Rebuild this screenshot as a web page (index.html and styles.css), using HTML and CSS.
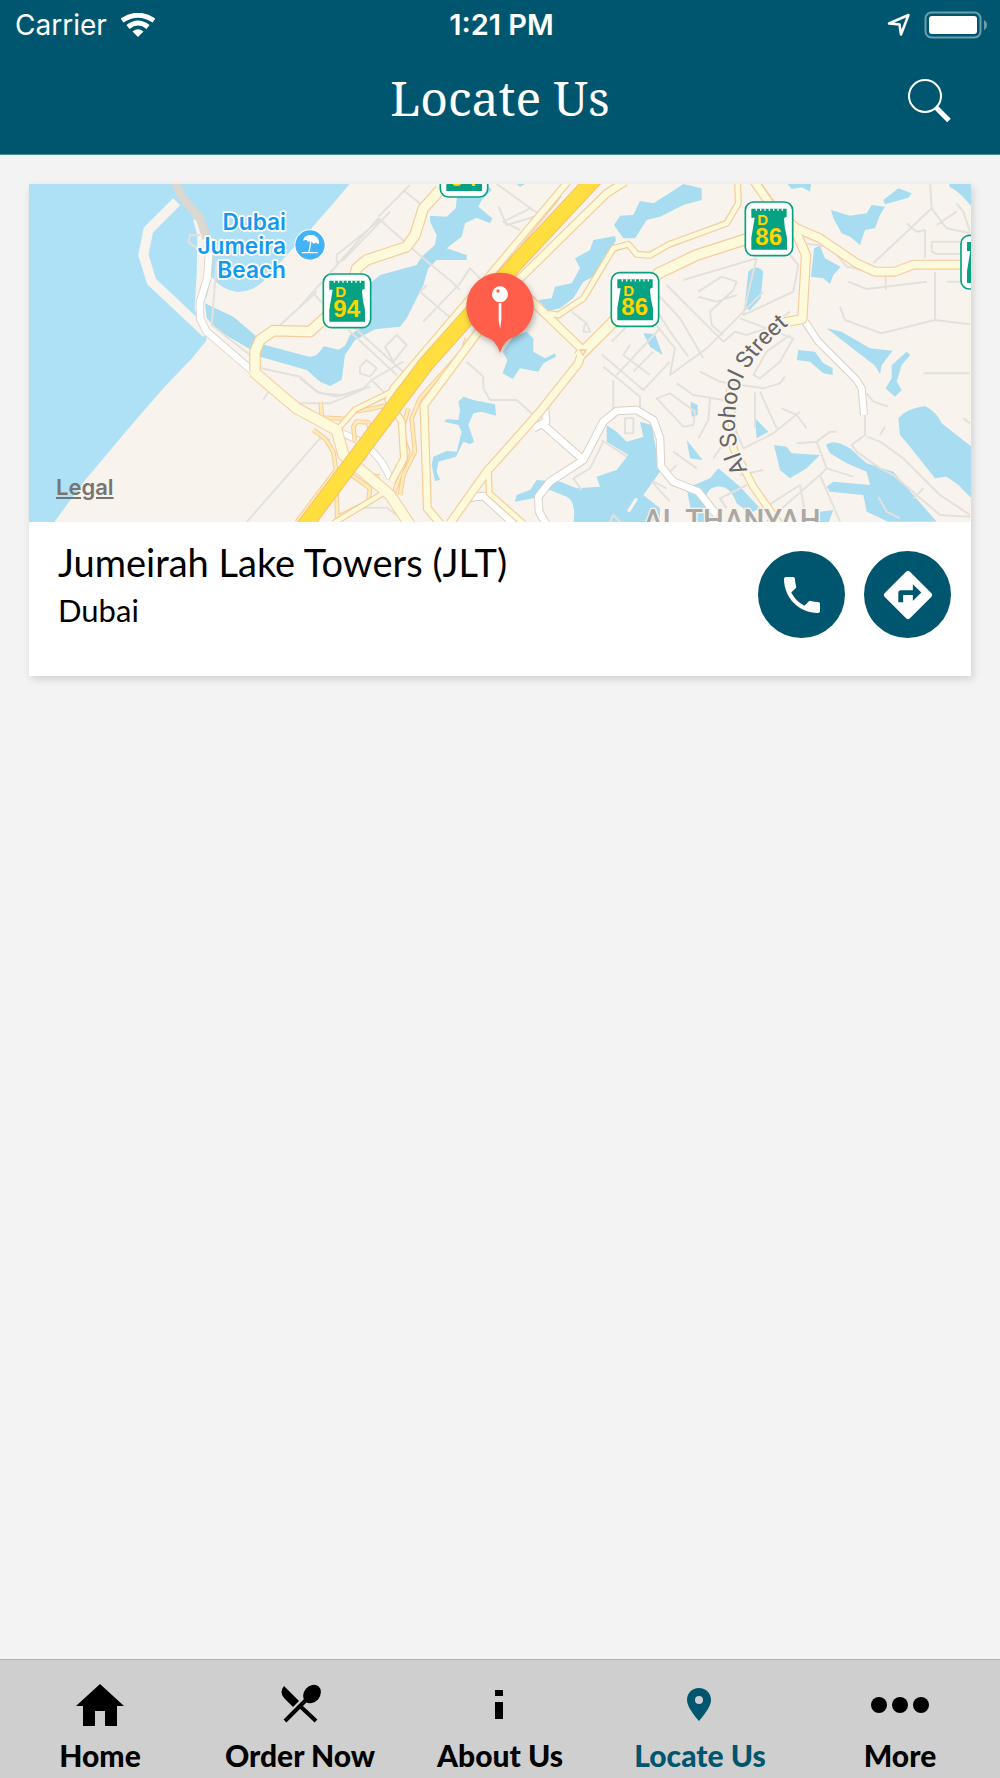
FILE: index.html
```html
<!DOCTYPE html>
<html lang="en">
<head>
    <meta charset="UTF-8" />
    <meta name="viewport" content="width=device-width, initial-scale=1.0" />
    <title>Locate Us</title>
    <link rel="stylesheet" href="styles.css">
</head>
<body>
    <header class="header">
        <div class="status-bar">
            <div class="carrier">
                <span>Carrier</span>
                <svg width="34" height="24" viewBox="0 0 34 24" fill="none" stroke="#fff">
                    <path d="M1 7.500Q17-3 33 7.500" stroke-width="5" />
                    <path d="M7 14Q17 6 27 14" stroke-width="5" />
                    <path d="M11.500 18.500Q17 14 22.500 18.500L17 24Z" fill="#fff" stroke="none" />
                </svg>
            </div>
            <div class="time">1:21 PM</div>
            <div class="indicators">
                <svg width="24" height="24" viewBox="0 0 24 24" fill="none" stroke="#fff" stroke-width="2.500" stroke-linejoin="round">
                    <path d="M21.500 2L14 21.500L12.500 11.500L2 10.500Z" />
                </svg>
                <svg width="64" height="28" viewBox="0 0 64 28">
                    <rect x="1.500" y="1.500" width="55" height="25" rx="6" fill="none" stroke="#6b9dab" stroke-width="2" />
                    <rect x="5" y="5" width="48" height="18" rx="3" fill="#fff" />
                    <path d="M60 9Q63 10.500 63 14Q63 17.500 60 19Z" fill="#6b9dab" />
                </svg>
            </div>
        </div>
        <div class="title-bar">
            <h1>Locate Us</h1>
            <button class="search-button" aria-label="Search">
                <svg width="44" height="48" viewBox="0 0 44 48" fill="none" stroke="#fff">
                    <circle cx="18" cy="22" r="16" stroke-width="2" />
                    <path d="M28.500 33L42 46.500" stroke-width="5" />
                </svg>
            </button>
        </div>
    </header>

    <main class="content">
        <article class="card">
            <div class="map">
                <svg class="map-art" viewBox="-813 27 2826 1014" preserveAspectRatio="xMidYMid slice" role="img" aria-label="Map of Jumeirah Lake Towers">
                    <defs>
                        <g id="shield">
                            <rect x="3" y="3" width="142" height="161" rx="25" fill="#fff" stroke="#06a281" stroke-width="5" />
                            <path d="M21 23H127V48Q119 48 119 54Q120 82 128 110V146H21V110L31 50H21Z" fill="#06a281" />
                            <path d="M34 26H119" stroke="#fff" stroke-width="7" stroke-dasharray="4 9" />
                            <text class="shield-letter" x="39" y="72">D</text>
                        </g>
                        <!-- link roads of the interchange -->
                        <g id="ramps">
                            <path d="M62 683L66 728L150 732M120 755L160 710L220 700L265 690M40 765L75 790L100 830L108 885L-10 1041M108 885L112 1041M165 800L160 755L170 740L205 742L215 800L190 850L175 845M325 700L305 770L325 830L300 900L280 960M240 905Q180 905 130 855M500 490L490 525L360 670L335 730L345 830L310 900L300 960M155 900L210 940L205 975M115 1025L245 960M520 340L500 390L300 640M780 60L610 270" />
                        </g>
                    </defs>

                    <rect x="-820" y="20" width="2840" height="1030" fill="#f8f4ed" />

                    <!-- sea -->
                    <path fill="#aee1f5" d="M-820 20H155L100 85L30 165L-40 240L-100 310Q-140 352-190 350Q-235 345-265 305L-285 385L-290 440L-280 495L-320 545L-410 640L-510 755L-640 910L-740 1045H-820Z" />
                    <path class="beach" stroke-width="30" d="M-370 80L-455 165L-470 240L-445 320L-280 475" />
                    <path class="beach" stroke-width="32" d="M-305 130L-292 180L-294 300L-300 400L-280 470" />

                    <!-- marina, lakes and pools -->
                    <g fill="#a8dcf0">
                        <path d="M-285 385L-200 425L-130 485L-105 510L30 546L50 540L72 514L115 524L135 512L150 480L180 460L215 370L205 330L240 300L350 270L365 245L405 210L410 180L390 140V122L440 125L467 100L475 27H560L575 45L545 75L535 95L577 130L570 145L530 128L495 145L485 185L440 220L500 240V255L410 255L385 280L370 330L350 370L320 430L300 455L225 463L165 495L135 540L125 615L90 633L60 620L20 585L-120 545L-155 520L-240 470L-280 430Z" />
                        <path d="M640 485L680 470L700 490V530L735 550L765 535L768 545L730 565L715 590L660 580L638 612L608 595L622 555L608 530Z" />
                        <path d="M490 665L520 675L585 688L588 722L545 710L520 715L505 750L522 800L510 808L490 800L468 845L415 860L410 890L420 915L405 918L395 870L400 845L440 828L470 830L485 770L475 750L433 740L440 732L475 735L480 705L475 680Z" />
                        <path d="M715 375L755 370L765 335L815 325L840 280L825 250L870 225L880 195L945 183L948 195L900 295L850 320L820 370L780 400L745 408Z" />
                        <path d="M942 150L960 122L1000 120L1020 78L1060 85L1115 50L1150 27L1205 40V75L1150 90L1080 125L1040 135L1005 190L970 190Z" />
                        <path d="M1593 105L1650 122L1700 115L1715 90L1755 95L1740 120L1725 160L1695 165L1680 210L1650 185L1625 175L1600 130ZM1750 75L1795 40L1835 55L1825 68L1755 88ZM1463 27H1533L1530 50L1505 37L1475 42ZM1948 27H2015V95Q1980 50 1948 35Z" />
                        <path d="M1542 220L1560 212L1575 250L1622 275L1600 300L1590 327L1570 310L1533 305ZM1345 290Q1370 265 1390 290L1382 370L1350 405L1333 400Z" />
                        <path d="M1580 460L1625 470L1710 520L1778 527L1745 570L1740 597L1725 572ZM1820 530L1831 540L1805 570L1790 620L1805 645L1785 665L1757 640L1775 610V570ZM1495 525L1545 530L1570 565L1598 580V600L1570 595L1530 560L1490 555Z" />
                        <path d="M1795 730Q1820 700 1875 693Q1910 710 1925 745L2015 815V970L1975 930L1940 905L1905 910L1830 815L1800 780Z" />
                        <path d="M1030 475L1065 477L1088 540L1050 515ZM1172 680L1193 690V720L1175 725ZM1365 730L1405 770L1370 790ZM1160 795L1208 855L1170 850Z" />
                        <path d="M1422 810L1460 815L1475 835L1560 840L1520 880L1470 910L1440 885ZM1578 810Q1600 790 1650 820L1700 865L1780 890L1840 960L1910 1040H1765L1700 1010L1690 960L1590 950L1580 935L1600 920L1710 930L1700 890L1640 865L1590 835Z" />
                        <path d="M920 750L950 770L980 800L1030 785L1020 740L1055 750L1080 890L1030 960L1080 1000V1045H820Q830 980 800 965L750 945L700 970L645 980L650 960L690 945L710 915L780 920L830 940L900 935L890 905L950 885L985 840L920 800Z" />
                        <path d="M1160 940L1230 910L1255 880L1320 935L1380 1000L1350 1015L1310 985Q1290 930 1250 935T1220 990L1240 1045H1180ZM1560 1010L1600 1005L1585 1045H1545ZM650 27H675L660 35Z" />
                    </g>
                    <path class="islet" d="M1110 885Q1140 910 1100 960M1010 970L985 1010" />

                    <!-- small streets -->
                    <g class="streets">
                        <path d="M0 395L235 130L370 250L455 320L480 345M235 125L330 30M310 45L365 90M240 135L110 240L110 262L130 255L270 110M145 465L290 600M160 455L320 600M40 355L110 430M370 440L480 325L510 280L550 320M380 330L360 350L500 470M255 515L290 480L320 510L280 560ZM180 575L200 555L230 580L210 605L180 595ZM215 615L280 680M0 610L60 655L130 660L190 640L215 615L310 560M590 27L720 120L620 150L595 95M0 685H90L210 635M690 100L610 140L660 165" />
                        <path d="M-160 1041L60 790L90 795M-65 455L50 350M-115 580L0 605L50 650L110 665L190 640M-110 675L-95 650M-250 260L-265 450L-150 540L-120 550M-300 180H-330L-335 200L-310 220L-260 210" />
                        <path d="M500 560L550 605V640L570 675L650 675L700 720M815 410L860 445L870 470H850L855 445M905 538L1030 645L1110 560M910 575L1020 665V700M935 500L1005 430M990 510L970 540L1050 600M1000 590L1060 530M940 615V700M950 600L1080 460M975 730H1000V775H975ZM910 800L870 880L820 910L845 945M905 795L980 845M190 998H260L290 1020M930 1041L940 1020L960 1041" />
                        <path d="M1100 330L1170 400L1270 500M1075 360L1140 430L1210 550M1055 380L1110 470L1165 545M1060 440L1125 520L1110 600L1220 520L1390 350M1195 350L1265 305L1310 320L1300 345L1230 410L1235 450L1270 480M1195 365L1250 380L1310 360M1150 315L1370 250L1350 330L1330 420L1480 350L1495 270L1470 240M1320 430L1400 460L1470 410M1270 500L1305 470L1340 480L1400 460L1480 490L1440 560L1380 610L1360 600L1400 530L1470 480M1130 625L1180 660L1300 680M1070 670L1110 655L1185 710L1180 750L1150 755ZM1200 590L1260 620L1390 640L1440 625L1455 605M1310 640L1300 750L1330 820L1420 775L1500 710M1365 650V760M1380 650L1430 760M1445 700L1490 720L1520 760M1230 670L1225 735L1195 790" />
                        <path d="M1890 20L1895 100L1720 265M1895 100L1940 160L2010 175M1820 145L1850 170L1875 165V250M1970 85L1990 110L2010 170M1970 110L1910 150M1895 200H2010M1895 200V230L1910 237H2010M1905 290V435L1745 475L1635 435L1620 395M1645 320L1700 342L1880 320M1757 300V345M1905 435L2010 448M1940 320H2010M1510 205L1590 215L1640 275L1720 290M1870 595H2010M1695 720V780L1655 810L1670 830L1740 880L1780 900L1920 1020L2010 1025M1700 785L1740 800L1810 850L1920 960L2010 1020M1700 655L1720 680L1765 695M1490 805L1550 800L1590 770L1610 770M1550 800L1580 880L1560 900L1400 1040M1580 880L1660 905M1560 900L1620 1040M1390 1000L1500 930L1520 1041M1735 965L1760 1010L1800 1030M1870 940L1840 970M1990 730L2010 745M1740 780L1755 755" />
                        <path d="M1120 830L1190 880M1130 870L1110 890M1055 920L1110 980M1060 920L1100 940M1240 850L1260 820L1300 800M1320 900L1390 885M1340 930L1260 970L1280 1000" />
                    </g>

                    <!-- roads: casing first, fill on top -->
                    <path class="boulevard" d="M-375 20L-355 65L-300 130L-280 190" />
                    <g class="casing-white">
                        <path d="M-270 190L-278 310L-300 380V430L-280 470L-140 590" stroke-width="25" />
                        <path d="M735 700L738 740L700 760M725 745L850 855L910 740L950 708L1010 705L1060 735L1080 790L1083 875L1120 920L1195 950L1250 1020M850 855L750 920L715 965L717 1010L740 1050M510 968L550 963L640 1045" stroke-width="26" />
                        <path d="M1515 440L1555 500L1670 615L1685 640L1692 720" stroke-width="24" />
                        <path d="M110 770Q230 805 270 910" stroke-width="23" />
                    </g>
                    <g class="fill-white">
                        <path d="M-270 190L-278 310L-300 380V430L-280 470L-140 590" stroke-width="20" />
                        <path d="M735 700L738 740L700 760M725 745L850 855L910 740L950 708L1010 705L1060 735L1080 790L1083 875L1120 920L1195 950L1250 1020M850 855L750 920L715 965L717 1010L740 1050M510 968L550 963L640 1045" stroke-width="20" />
                        <path d="M1515 440L1555 500L1670 615L1685 640L1692 720" stroke-width="18" />
                        <path d="M110 770Q230 805 270 910" stroke-width="18" />
                    </g>
                    <use href="#ramps" class="ramp-casing" />
                    <use href="#ramps" class="ramp-fill" />
                    <g class="casing">
                        <path d="M820 0L540 335L280 640L265 675L305 740L312 850L275 920" stroke-width="24" />
                        <path d="M975 20L920 55L640 330L372 690L382 1000L420 1045" stroke-width="27" />
                        <path d="M660 345L750 430L848 525L835 565L720 710L560 890L450 1045" stroke-width="28" />
                        <path d="M745 415L775 420L850 370L940 220L985 208L1010 238L1050 241L1105 209L1280 145L1315 85L1312 0" stroke-width="21" />
                        <path d="M835 545L930 450L1075 295L1190 240L1340 192" stroke-width="36" />
                        <path d="M565 890L568 955L675 1050" stroke-width="21" />
                        <path d="M1350 0L1420 100L1490 160L1560 190L1670 265L1725 290H1785L1840 269H2020" stroke-width="30" />
                        <path d="M1485 165L1518 240L1507 432L1450 443" stroke-width="31" />
                        <path d="M1290 640L1300 820L1360 935L1440 1050" stroke-width="25" />
                        <path d="M-140 590L-10 700L110 765L130 840L270 960L330 1050" stroke-width="36" />
                        <path d="M-135 590V530L-120 495L-80 467L30 470L150 360L170 280L200 255L320 215L345 180L370 100L420 45" stroke-width="35" />
                        <path d="M100 1045L245 957M120 755L165 704L275 650" stroke-width="20" />
                    </g>
                    <g class="fill-cream">
                        <path d="M820 0L540 335L280 640L265 675L305 740L312 850L275 920" stroke-width="17" />
                        <path d="M975 20L920 55L640 330L372 690L382 1000L420 1045" stroke-width="20" />
                        <path d="M660 345L750 430L848 525L835 565L720 710L560 890L450 1045" stroke-width="21" />
                        <path d="M745 415L775 420L850 370L940 220L985 208L1010 238L1050 241L1105 209L1280 145L1315 85L1312 0" stroke-width="14" />
                        <path d="M835 545L930 450L1075 295L1190 240L1340 192" stroke-width="29" />
                        <path d="M565 890L568 955L675 1050" stroke-width="14" />
                        <path d="M1350 0L1420 100L1490 160L1560 190L1670 265L1725 290H1785L1840 269H2020" stroke-width="23" />
                        <path d="M1485 165L1518 240L1507 432L1450 443" stroke-width="24" />
                        <path d="M1290 640L1300 820L1360 935L1440 1050" stroke-width="18" />
                        <path d="M-140 590L-10 700L110 765L130 840L270 960L330 1050" stroke-width="30" />
                        <path d="M-135 590V530L-120 495L-80 467L30 470L150 360L170 280L200 255L320 215L345 180L370 100L420 45" stroke-width="28" />
                        <path d="M100 1045L245 957M120 755L165 704L275 650" stroke-width="13" />
                    </g>
                    <path class="road-split" d="M1365 0L1445 115M840 525H858L849 540Z" />

                    <!-- highway -->
                    <path d="M885 10L650 262L378 567L8 1060" fill="none" stroke="#f3b877" stroke-width="49" />
                    <path d="M885 10L650 262L378 567L8 1060" fill="none" stroke="#ffdf3f" stroke-width="44" />

                    <use href="#shield" x="67" y="294" />
                    <text class="shield-number" x="100" y="425">94</text>
                    <use href="#shield" x="931" y="290" />
                    <text class="shield-number" x="964" y="421">86</text>
                    <use href="#shield" x="1333" y="78" />
                    <text class="shield-number" x="1366" y="209">86</text>
                    <use href="#shield" x="1980" y="178" />
                    <use href="#shield" x="418" y="-98" />
                    <text class="shield-number" x="451" y="33">94</text>

                    <g class="place">
                        <text x="-42" y="164">Dubai</text>
                        <text x="-42" y="237">Jumeira</text>
                        <text x="-42" y="309">Beach</text>
                    </g>
                    <circle cx="30" cy="210" r="47" fill="#fff" />
                    <circle cx="30" cy="210" r="44" fill="#44b2f7" />
                    <path d="M9 197Q12 178 37 180Q58 184 57 207L47 203L41 206L33 198L25 201L19 194ZM36 174L39 182" fill="#fff" />
                    <path d="M36 180L27 231M5 233H53" fill="none" stroke="#fff" stroke-width="4" />

                    <path id="street-curve" d="M1343 886Q1302 810 1305 740Q1308 650 1333 602Q1368 532 1470 445" fill="none" />
                    <text class="street-name"><textPath href="#street-curve">Al Sohool Street</textPath></text>
                    <text class="district" x="1030" y="1065">AL THANYAH</text>

                    <g class="pin">
                        <path d="M600 533Q588 495 560 487A101 101 0 1 1 640 487Q612 495 600 533Z" fill="#ff5e4a" />
                        <circle cx="600" cy="358" r="24" fill="#fff" />
                        <circle cx="594" cy="348" r="5" fill="#ff5e4a" />
                        <path d="M596 384H604V435L600 462L596 435Z" fill="#fff" />
                    </g>
                </svg>
                <a class="legal" href="#">Legal</a>
            </div>
            <div class="details">
                <div class="place-text">
                    <h2>Jumeirah Lake Towers (JLT)</h2>
                    <p>Dubai</p>
                </div>
                <div class="actions">
                    <button class="round-button" aria-label="Call">
                        <svg width="48" height="48" viewBox="0 0 24 24" fill="#fff">
                            <path d="M6.620 10.790c1.440 2.830 3.760 5.140 6.590 6.590l2.200-2.200c.27-.27.67-.36 1.020-.24 1.120.37 2.330.57 3.570.57.55 0 1 .45 1 1V20c0 .55-.45 1-1 1-9.390 0-17-7.610-17-17 0-.55.45-1 1-1h3.500c.55 0 1 .45 1 1 0 1.250.2 2.450.57 3.570.11.35.03.74-.25 1.020l-2.200 2.200z" />
                        </svg>
                    </button>
                    <button class="round-button" aria-label="Directions">
                        <svg width="58" height="58" viewBox="0 0 24 24" fill="#fff">
                            <path d="M21.710 11.290l-9-9c-.39-.39-1.020-.39-1.410 0l-9 9c-.39.39-.39 1.020 0 1.410l9 9c.39.39 1.020.39 1.410 0l9-9c.39-.38.39-1.010 0-1.410zM14 14.500V12h-4v3H8v-4c0-.55.45-1 1-1h5V7.500l3.500 3.500-3.500 3.500z" />
                        </svg>
                    </button>
                </div>
            </div>
        </article>
    </main>

    <nav class="tabs">
        <a class="tab" href="#">
            <svg width="48" height="48" viewBox="0 0 48 48"><path d="M24 4L48 26H41V46H29V31H19V46H7V26H0Z" /></svg>
            <span>Home</span>
        </a>
        <a class="tab" href="#">
            <svg width="48" height="48" viewBox="0 0 48 48">
                <path d="M8 6L23 21L17 27L8 18Q3 12 8 6Z" />
                <ellipse cx="36" cy="14" rx="8" ry="10" transform="rotate(40 36 14)" />
                <path d="M32 18L9 41M24 26L40 41" fill="none" stroke="#000" stroke-width="4" />
            </svg>
            <span>Order Now</span>
        </a>
        <a class="tab" href="#">
            <svg width="48" height="48" viewBox="0 0 48 48"><path d="M19 10H27V16H19ZM19 22H27V39H19Z" /></svg>
            <span>About Us</span>
        </a>
        <a class="tab active" href="#" aria-current="page">
            <svg width="48" height="48" viewBox="0 0 48 48"><path fill-rule="evenodd" d="M23 8C16 8 11 13 11 20C11 28 23 41 23 41S35 28 35 20C35 13 30 8 23 8ZM23 16A4 4 0 1 1 23 24A4 4 0 1 1 23 16Z" /></svg>
            <span>Locate Us</span>
        </a>
        <a class="tab" href="#">
            <svg width="60" height="48" viewBox="0 0 60 48"><circle cx="9" cy="25" r="8" /><circle cx="30" cy="25" r="8" /><circle cx="51" cy="25" r="8" /></svg>
            <span>More</span>
        </a>
    </nav>
</body>
</html>
```
FILE: styles.css
```css
* { box-sizing: border-box; margin: 0; padding: 0; }
body {
    display: flex;
    flex-direction: column;
    min-height: 100vh;
    background-color: #f3f3f3;
    color: #000;
    font-family: Lato, sans-serif;
}
svg { display: block; }
a { color: inherit; text-decoration: none; }
button { border: none; background: none; cursor: pointer; }

/* Header */
.header {
    background-color: #00566e;
    border-bottom: 1px solid #4a8797;
    color: #fff;
}
.status-bar {
    display: grid;
    grid-template-columns: 1fr auto 1fr;
    align-items: center;
    height: 50px;
    padding: 0 12px 0 15px;
    font-family: Inter, sans-serif;
    font-size: 28px;
    line-height: 34px;
}
.carrier {
    display: flex;
    align-items: center;
    gap: 14px;
}
.time {
    font-size: 29px;
    font-weight: 600;
}
.indicators {
    display: flex;
    align-items: center;
    justify-content: flex-end;
    gap: 13px;
}
.title-bar {
    display: grid;
    grid-template-columns: 1fr auto 1fr;
    align-items: center;
    height: 104px;
    padding: 0 49px 8px;
}
.title-bar h1 {
    grid-column: 2;
    font-family: "Noto Serif", "DejaVu Serif Condensed", "DejaVu Serif", serif;
    font-size: 48px;
    font-weight: 400;
    line-height: 60px;
}
.search-button { justify-self: end; }

/* Location card */
.content {
    flex: 1;
    padding: 29px;
}
.card {
    background: #fff;
    box-shadow: 2px 3px 8px rgba(0,0,0,0.14);
}
.map {
    position: relative;
    height: 338px;
    overflow: hidden;
}
.map-art {
    width: 100%;
    height: 100%;
}
.legal {
    position: absolute;
    left: 27px;
    bottom: 21px;
    color: #777572;
    font-family: Inter, sans-serif;
    font-size: 22px;
    font-weight: 600;
    line-height: 28px;
    text-decoration: underline;
}
.details {
    display: flex;
    align-items: flex-start;
    justify-content: space-between;
    padding: 14px 20px 38px 29px;
}
.details h2 {
    font-size: 38px;
    font-weight: 400;
    line-height: 52px;
}
.details p {
    font-size: 31px;
    line-height: 44px;
}
.actions {
    display: flex;
    gap: 19px;
    padding-top: 15px;
}
.round-button {
    display: flex;
    align-items: center;
    justify-content: center;
    width: 87px;
    height: 87px;
    border-radius: 50%;
    background-color: #00566e;
}

/* Map drawing */
.beach { fill: none; stroke: #f8f4ed; stroke-linejoin: round; }
.islet { fill: none; stroke: #f8f4ed; stroke-width: 10; }
.streets { fill: none; stroke: #e4e1dc; stroke-width: 6; stroke-linejoin: round; }
.boulevard { fill: none; stroke: #dad8d1; stroke-width: 26; stroke-linejoin: round; }
.casing { fill: none; stroke: #f6cc9c; stroke-linejoin: round; }
.casing-white { fill: none; stroke: #d9d1c7; stroke-linejoin: round; }
.fill-cream { fill: none; stroke: #fcfadb; stroke-linejoin: round; }
.fill-white { fill: none; stroke: #fff; stroke-linejoin: round; }
.ramp-casing { fill: none; stroke: #f6cc9c; stroke-width: 14; stroke-linejoin: round; }
.ramp-fill { fill: none; stroke: #ffebb5; stroke-width: 8; stroke-linejoin: round; }
.road-split { fill: none; stroke: #f6cc9c; stroke-width: 4; }
.shield-letter {
    fill: #ffd400;
    font: 700 45px "Liberation Sans", sans-serif;
}
.shield-number {
    fill: #ffd400;
    font: 700 72px "Liberation Sans", sans-serif;
}
.place {
    fill: #119bf0;
    stroke: #fff;
    stroke-width: 10;
    stroke-linejoin: round;
    paint-order: stroke;
    font: 600 68px Inter, sans-serif;
    text-anchor: end;
}
.street-name {
    fill: #666;
    stroke: #f8f4ed;
    stroke-width: 12;
    paint-order: stroke;
    font: 400 70px Roboto, sans-serif;
}
.district {
    fill: #aaa8a4;
    stroke: #f8f4ed;
    stroke-width: 8;
    paint-order: stroke;
    font: 500 88px Roboto, sans-serif;
}
.pin { filter: drop-shadow(4px 9px 9px rgba(0,0,0,0.3)); }

/* Bottom tabs */
.tabs {
    display: grid;
    grid-template-columns: repeat(5, 1fr);
    height: 119px;
    padding-top: 20px;
    background-color: #cfcfcf;
    border-top: 1px solid #b0b0b0;
}
.tab {
    display: flex;
    flex-direction: column;
    align-items: center;
    gap: 10px;
    font-size: 30px;
    font-weight: 900;
    line-height: 34px;
}
.tab svg { fill: currentColor; }
.tab.active { color: #00566e; }
```
